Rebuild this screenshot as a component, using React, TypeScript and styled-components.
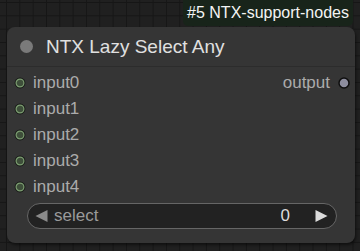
import React from "react";
import styled, { createGlobalStyle } from "styled-components";

const Global = createGlobalStyle`
  html, body { margin: 0; padding: 0; }
  body { background: #1f1f1f; overflow: hidden; font-family: "Liberation Sans", Arial, sans-serif; }
`;

const Canvas = styled.div`
  position: relative;
  width: 360px;
  height: 251px;
  overflow: hidden;
  background-color: #202020;
  background-image:
    linear-gradient(to right, #161616 1px, transparent 1px),
    linear-gradient(to bottom, #161616 1px, transparent 1px);
  background-size: 13.33px 13.33px;
  background-position: 6px 2px;
`;

const Badge = styled.div`
  position: absolute;
  left: 183px;
  top: -4px;
  width: 170px;
  height: 30px;
  box-sizing: border-box;
  padding-top: 4px;
  background: #18241a;
  border-radius: 0 0 5px 5px;
  color: #f4f4f4;
  font-size: 16px;
  display: flex;
  align-items: center;
  justify-content: center;
`;

const Node = styled.div`
  position: absolute;
  left: 7px;
  top: 27px;
  width: 348px;
  height: 216px;
  background: #353535;
  border-radius: 8px;
  box-shadow: 1px 2px 3px rgba(0, 0, 0, 0.5);
  display: flex;
  flex-direction: column;
`;

const TitleBar = styled.div`
  height: 39px;
  display: flex;
  align-items: center;
  gap: 13px;
  padding-left: 13px;
  border-bottom: 1px solid #2c2c2c;
  color: #e0e0e0;
  font-size: 19px;
`;

const TitleDot = styled.span`
  width: 13px;
  height: 13px;
  border-radius: 50%;
  background: #7a7a7a;
  flex: none;
`;

const Body = styled.div`
  padding: 3px 0 0;
  display: flex;
  flex-direction: column;
`;

const Row = styled.div`
  height: 26px;
  display: flex;
  align-items: center;
  justify-content: space-between;
  font-size: 17px;
  color: #ababab;
`;

const SlotIn = styled.div`
  display: flex;
  align-items: center;
  gap: 7px;
  padding-left: 7px;
`;

const SlotOut = styled.div`
  display: flex;
  align-items: center;
  gap: 8px;
  padding-right: 5px;
`;

const Widget = styled.div`
  margin: 3px 18px 0 20px;
  height: 26px;
  box-sizing: border-box;
  border: 1px solid #666;
  border-radius: 13px;
  background: #222;
  display: flex;
  align-items: center;
  padding: 0 8px 0 7px;
  font-size: 17px;
`;

const WLabel = styled.span`
  color: #9a9a9a;
  margin-left: 6px;
  flex: 1;
`;

const WValue = styled.span`
  color: #dcdcdc;
  margin-right: 25px;
`;

const InDot = () => (
  <svg width="12" height="12" viewBox="0 0 12 12">
    <circle cx="6" cy="6" r="5.4" fill="#141714" />
    <circle cx="6" cy="6" r="3.9" fill="#3e4f3a" stroke="#7d9e72" strokeWidth="1.2" />
  </svg>
);

const OutDot = () => (
  <svg width="12" height="12" viewBox="0 0 12 12">
    <circle cx="6" cy="6" r="5" fill="#8d8d9e" stroke="#0e0e0e" strokeWidth="1.5" />
  </svg>
);

const Arrow = ({ dir, color }: { dir: "l" | "r"; color: string }) => (
  <svg width="13" height="14" viewBox="0 0 13 14">
    {dir === "l" ? (
      <polygon points="12.5,1 12.5,13 0.5,7" fill={color} />
    ) : (
      <polygon points="0.5,1 0.5,13 12.5,7" fill={color} />
    )}
  </svg>
);

export default function App() {
  const inputs = ["input0", "input1", "input2", "input3", "input4"];
  return (
    <>
      <Global />
      <Canvas>
        <Badge>#5 NTX-support-nodes</Badge>
        <Node>
          <TitleBar>
            <TitleDot />
            <span>NTX Lazy Select Any</span>
          </TitleBar>
          <Body>
            {inputs.map((n, i) => (
              <Row key={n}>
                <SlotIn>
                  <InDot />
                  <span>{n}</span>
                </SlotIn>
                {i === 0 && (
                  <SlotOut>
                    <span>output</span>
                    <OutDot />
                  </SlotOut>
                )}
              </Row>
            ))}
            <Widget>
              <Arrow dir="l" color="#8a8a8a" />
              <WLabel>select</WLabel>
              <WValue>0</WValue>
              <Arrow dir="r" color="#dcdcdc" />
            </Widget>
          </Body>
        </Node>
      </Canvas>
    </>
  );
}
